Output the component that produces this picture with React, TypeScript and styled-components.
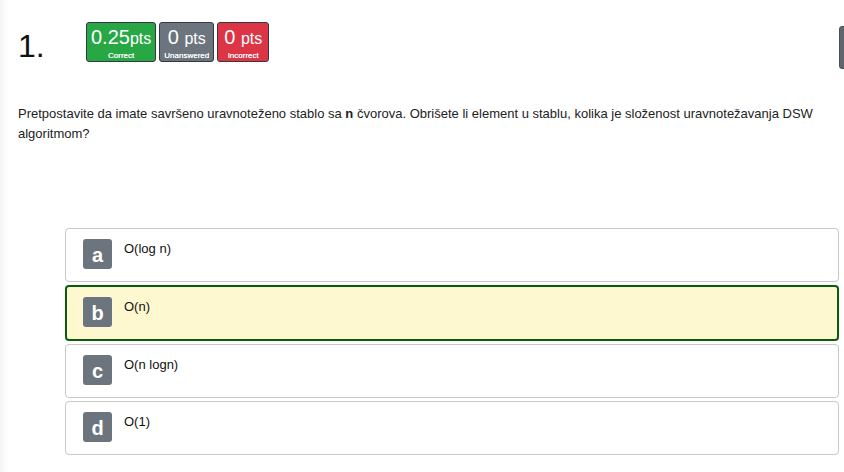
import React from 'react';
import styled, { createGlobalStyle } from 'styled-components';

const GlobalStyle = createGlobalStyle`
  html, body {
    margin: 0;
    padding: 0;
    overflow: hidden;
    background: #fff;
  }
  body {
    font-family: "Liberation Sans", Arial, sans-serif;
    color: #222;
  }
`;

const Page = styled.div`
  min-height: 472px;
  box-sizing: border-box;
  padding: 22px 5px 16px 18px;
  background: linear-gradient(to right, #f3f3f3 0, #fbfbfb 4px, #fff 8px);
`;

const Header = styled.div`
  display: flex;
  align-items: flex-start;
  height: 40px;
  margin-right: -5px;
`;

const QuestionNumber = styled.div`
  width: 68px;
  font-size: 32px;
  line-height: 40px;
  height: 40px;
  padding-top: 4px;
  box-sizing: border-box;
  color: #111;
`;

const Badges = styled.div`
  display: flex;
  gap: 3px;
`;

const Badge = styled.div<{ $bg: string }>`
  display: flex;
  flex-direction: column;
  align-items: center;
  min-width: 52px;
  height: 40px;
  box-sizing: border-box;
  padding: 2px 4px 0;
  background: ${({ $bg }) => $bg};
  border: 1px solid #343a40;
  border-radius: 3px;
  color: #fff;
`;

const Score = styled.div`
  font-size: 20px;
  line-height: 24px;
  white-space: nowrap;
`;

const Unit = styled.span`
  font-size: 16px;
`;

const ScoreLabel = styled.div`
  font-size: 8px;
  line-height: 10px;
  white-space: nowrap;
  text-shadow: 0 0 0.4px #fff;
`;

const Spacer = styled.div`
  flex: 1;
`;

const SideButton = styled.div`
  flex: none;
  width: 40px;
  height: 41px;
  margin-top: 4px;
  margin-right: -37px;
  background: #5f666d;
  border: 1px solid #4a5056;
  border-radius: 3px;
`;

const Question = styled.p`
  margin: 42px 0 0;
  font-size: 13px;
  line-height: 20px;
  color: #222;
`;

const Options = styled.div`
  display: flex;
  flex-direction: column;
  gap: 3px;
  margin: 84px 0 0 47px;
`;

const Option = styled.div<{ $selected?: boolean }>`
  display: flex;
  align-items: flex-start;
  gap: 12px;
  min-height: ${({ $selected }) => ($selected ? 56 : 54)}px;
  box-sizing: border-box;
  padding: ${({ $selected }) => ($selected ? '10px 16px' : '10px 17px')};
  border: ${({ $selected }) => ($selected ? '2px solid #0b5d0b' : '1px solid #c8c8c8')};
  border-radius: 4px;
  background: ${({ $selected }) => ($selected ? '#fdf8d0' : '#fff')};
`;

const Letter = styled.div`
  flex: none;
  display: flex;
  align-items: center;
  justify-content: center;
  width: 29px;
  height: 30px;
  border-radius: 3px;
  background: #6c757d;
  color: #fff;
  font-size: 20px;
  font-weight: bold;
  line-height: 1;
  padding-top: 2px;
  box-sizing: border-box;
`;

const OptionText = styled.div`
  font-size: 13px;
  line-height: 16px;
  padding-top: 2px;
  color: #111;
`;

const scores = [
  { value: '0.25', unit: 'pts', label: 'Correct', bg: '#28a745' },
  { value: '0 ', unit: 'pts', label: 'Unanswered', bg: '#6c757d' },
  { value: '0 ', unit: 'pts', label: 'Incorrect', bg: '#dc3545' },
];

const answers = [
  { key: 'a', text: 'O(log n)' },
  { key: 'b', text: 'O(n)', selected: true },
  { key: 'c', text: 'O(n logn)' },
  { key: 'd', text: 'O(1)' },
];

export default function App() {
  return (
    <>
      <GlobalStyle />
      <Page>
        <Header>
          <QuestionNumber>1.</QuestionNumber>
          <Badges>
            {scores.map((s) => (
              <Badge key={s.label} $bg={s.bg}>
                <Score>
                  {s.value}
                  <Unit>{s.unit}</Unit>
                </Score>
                <ScoreLabel>{s.label}</ScoreLabel>
              </Badge>
            ))}
          </Badges>
          <Spacer />
          <SideButton />
        </Header>

        <Question>
          Pretpostavite da imate savršeno uravnoteženo stablo sa <b>n</b> čvorova. Obrišete li
          element u stablu, kolika je složenost uravnotežavanja DSW algoritmom?
        </Question>

        <Options>
          {answers.map((a) => (
            <Option key={a.key} $selected={a.selected}>
              <Letter>{a.key}</Letter>
              <OptionText>{a.text}</OptionText>
            </Option>
          ))}
        </Options>
      </Page>
    </>
  );
}
